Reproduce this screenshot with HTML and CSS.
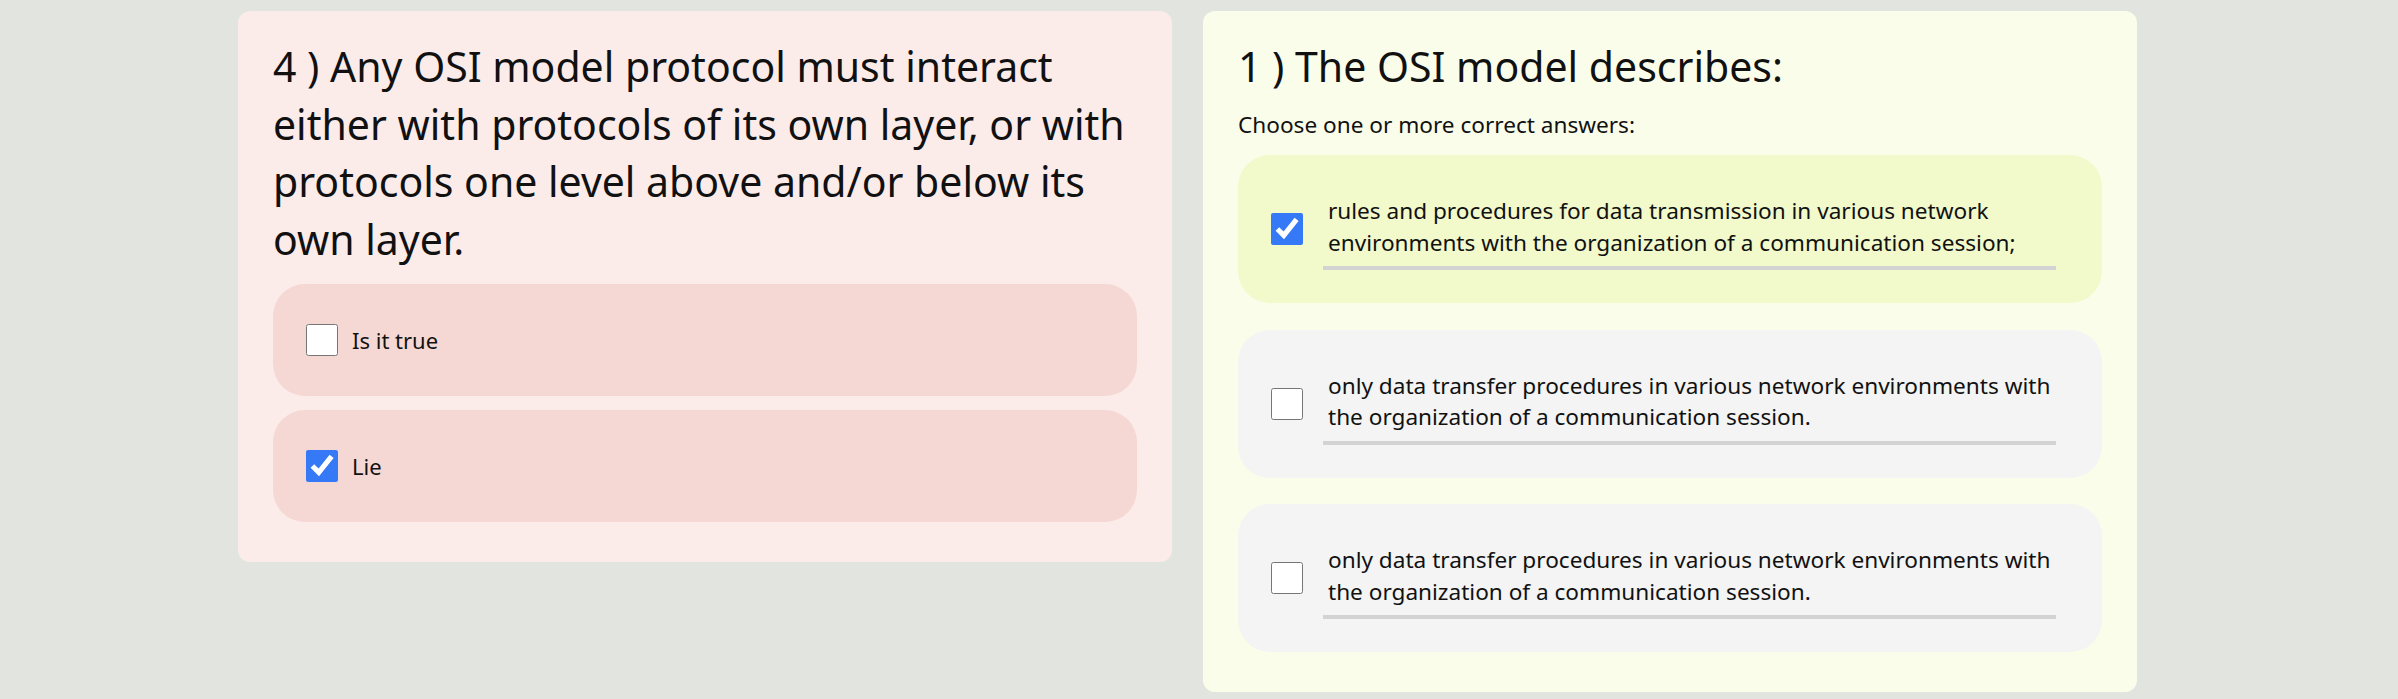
FILE: index.html
```html
<!DOCTYPE html>
<html lang="en">
<head>
<meta charset="utf-8">
<title>Quiz</title>
<link rel="stylesheet" href="styles.css">
</head>
<body>
<main class="board">
  <section class="card card-red">
    <h2 class="q-title">4 ) Any OSI model protocol must interact either with protocols of its own layer, or with protocols one level above and/or below its own layer.</h2>
    <div class="opts opts-tight">
      <label class="opt opt-red">
        <input type="checkbox" class="box">
        <span class="lbl">Is it true</span>
      </label>
      <label class="opt opt-red">
        <input type="checkbox" class="box" checked>
        <span class="lbl">Lie</span>
      </label>
    </div>
  </section>
  <section class="card card-yellow">
    <h2 class="q-title">1 ) The OSI model describes:</h2>
    <p class="hint">Choose one or more correct answers:</p>
    <div class="opts opts-wide">
      <label class="opt opt-multi opt-selected">
        <input type="checkbox" class="box" checked>
        <span class="ans">rules and procedures for data transmission in various network environments with the organization of a communication session;</span>
      </label>
      <label class="opt opt-multi opt-grey">
        <input type="checkbox" class="box">
        <span class="ans">only data transfer procedures in various network environments with the organization of a communication session.</span>
      </label>
      <label class="opt opt-multi opt-grey">
        <input type="checkbox" class="box">
        <span class="ans">only data transfer procedures in various network environments with the organization of a communication session.</span>
      </label>
    </div>
  </section>
</main>
</body>
</html>
```
FILE: styles.css
```css
html, body {
  margin: 0;
  padding: 0;
}
body {
  background: #e2e4df;
  color: #111;
  font-family: "Noto Sans", "Open Sans", sans-serif;
  width: 2398px;
  height: 699px;
  overflow: hidden;
}
.board {
  display: flex;
  align-items: flex-start;
  gap: 31px;
  padding: 11px 0 0 238px;
}
.card {
  width: 934px;
  box-sizing: border-box;
  border-radius: 12px;
  padding: 27px 35px 40px 35px;
}
.card-red { background: #fbecea; }
.card-yellow { background: #fbfdeb; }
.q-title {
  margin: 0;
  font-weight: 400;
  font-size: 41px;
  line-height: 57.5px;
  color: #111;
}
.card-red .q-title { margin-bottom: 16px; }
.card-yellow .q-title { margin-bottom: 13.5px; }
.hint {
  margin: 0 0 14.5px 0;
  font-size: 22.6px;
  line-height: 31.5px;
}
.opts {
  display: flex;
  flex-direction: column;
}
.opts-tight { gap: 14px; }
.opts-wide { gap: 26.5px; }
.opt {
  display: flex;
  align-items: center;
  border-radius: 32px;
  cursor: pointer;
}
.opt-red {
  background: #f5d8d3;
  padding: 40px 33px;
}
.opt-multi {
  padding: 40px 46px 33px 33px;
}
.opt-selected { background: #f2f9cb; }
.opt-grey { background: #f3f4f3; }
.box {
  width: 32px;
  height: 32px;
  margin: 0;
  flex: 0 0 auto;
  accent-color: #3579f6;
}
.opt-multi .box { margin-bottom: 7px; }
.lbl {
  margin-left: 14px;
  font-size: 22px;
  line-height: 32px;
}
.ans {
  flex: 1;
  margin-left: 20px;
  padding: 0 0 8px 5px;
  border-bottom: 4px solid #d3d3d3;
  font-size: 22.6px;
  line-height: 31.5px;
}
```
